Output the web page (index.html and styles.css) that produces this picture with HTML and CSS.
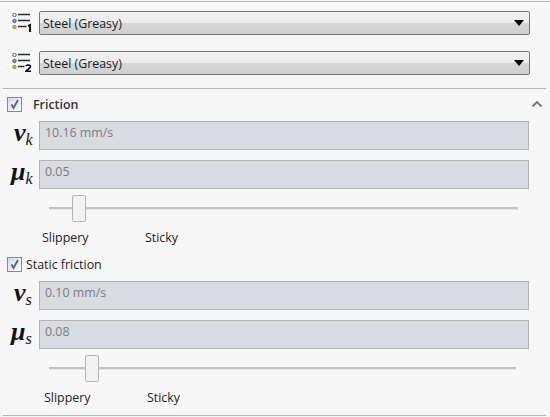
FILE: index.html
```html
<!DOCTYPE html>
<html lang="en">
<head>
<meta charset="utf-8">
<title>Friction</title>
<link rel="stylesheet" href="styles.css">
</head>
<body>
<div class="panel">
  <div class="select-group">
    <div class="select-row">
      <svg class="list-icon" width="24" height="20" viewBox="0 0 24 20">
        <circle cx="4.500" cy="2" r="1.700" fill="#f4f4f4" stroke="#666"/>
        <circle cx="4.500" cy="8" r="1.700" fill="#6aa5d8" stroke="#3a6a9a"/>
        <circle cx="4.500" cy="14" r="1.700" fill="#e8bd3a" stroke="#a8831c"/>
        <path d="M8 1.500h12M8 7.500h12M8 13.500h8.500" stroke="#2a2a2a" stroke-width="1.500"/>
        <path d="M18 13l2-1v7" stroke="#000" stroke-width="1.800" fill="none"/>
      </svg>
      <div class="select"><span>Steel (Greasy)</span><i class="arrow"></i></div>
    </div>
    <div class="select-row">
      <svg class="list-icon" width="24" height="20" viewBox="0 0 24 20">
        <circle cx="4.500" cy="2" r="1.700" fill="#f4f4f4" stroke="#666"/>
        <circle cx="4.500" cy="8" r="1.700" fill="#6aa5d8" stroke="#3a6a9a"/>
        <circle cx="4.500" cy="14" r="1.700" fill="#e8bd3a" stroke="#a8831c"/>
        <path d="M8 1.500h12M8 7.500h12M8 13.500h6.500" stroke="#2a2a2a" stroke-width="1.500"/>
        <path d="M16 13c.5-1.500 4.500-1.500 4.500.6 0 1.900-4 2.800-4.500 4.700h5" stroke="#000" stroke-width="1.600" fill="none"/>
      </svg>
      <div class="select"><span class="select-text-low">Steel (Greasy)</span><i class="arrow"></i></div>
    </div>
  </div>

  <section class="friction">
    <header class="friction-head">
      <span class="check"><svg width="11" height="11" viewBox="0 0 11 11"><path d="M2.500 5.500l2 3.500L9 1" fill="none" stroke="#3d5fa8" stroke-width="1.800"/></svg></span>
      <strong>Friction</strong>
      <svg class="chevron" width="12" height="8" viewBox="0 0 12 8"><path d="M1.500 6.500L6 2l4.500 4.500" fill="none" stroke="#777" stroke-width="1.800"/></svg>
    </header>
    <div class="field"><span class="symbol sym-v"><b>v</b><em>k</em></span><div class="input">10.16 mm/s</div></div>
    <div class="field"><span class="symbol"><b>μ</b><em>k</em></span><div class="input">0.05</div></div>
    <div class="slider"><i class="thumb thumb-k"></i></div>
    <div class="slider-labels"><span>Slippery</span><span>Sticky</span></div>
  </section>

  <section class="static">
    <label class="static-head">
      <span class="check"><svg width="11" height="11" viewBox="0 0 11 11"><path d="M2.500 5.500l2 3.500L9 1" fill="none" stroke="#3d5fa8" stroke-width="1.800"/></svg></span>
      Static friction
    </label>
    <div class="field"><span class="symbol sym-v"><b>v</b><em>s</em></span><div class="input">0.10 mm/s</div></div>
    <div class="field"><span class="symbol"><b>μ</b><em>s</em></span><div class="input">0.08</div></div>
    <div class="slider slider-s"><i class="thumb thumb-s"></i></div>
    <div class="slider-labels labels-s"><span>Slippery</span><span>Sticky</span></div>
  </section>
</div>
</body>
</html>
```
FILE: styles.css
```css
html, body {
  margin: 0;
  padding: 0;
}
body {
  width: 550px;
  height: 417px;
  overflow: hidden;
  background: #f7f7f7;
  font-family: "Open Sans", "Noto Sans", sans-serif;
  font-size: 12.4px;
  color: #222;
}
.panel {
  box-sizing: border-box;
  border-top: 1px solid #b9b9b9;
  margin: 1px 0 0;
  height: 416px;
}
.select-group {
  margin: 0 4px 0 3px;
  padding: 9px 0 13px;
  border-bottom: 1px solid #b5b5b5;
  display: flex;
  flex-direction: column;
  gap: 16px;
}
.select-row {
  display: flex;
  align-items: center;
  gap: 5px;
  padding-left: 7px;
  padding-right: 16px;
}
.list-icon {
  flex: none;
}
.select {
  flex: 1;
  height: 24px;
  box-sizing: border-box;
  border: 1px solid #777;
  border-radius: 2px;
  background: linear-gradient(#f2f2f2 0, #ececec 48%, #d6d6d6 52%, #d0d0d0 100%);
  display: flex;
  align-items: center;
  justify-content: space-between;
  padding: 0 5px 0 3px;
}
.select-text-low {
  margin-top: 1px;
}
.arrow {
  width: 0;
  height: 0;
  border-left: 5px solid transparent;
  border-right: 5px solid transparent;
  border-top: 6px solid #000;
}
.check {
  flex: none;
  width: 15px;
  height: 15px;
  box-sizing: border-box;
  border: 1px solid #8a8a8a;
  background: linear-gradient(135deg, #d4d9e2, #fff);
  display: inline-flex;
  align-items: center;
  justify-content: center;
}
.friction {
  padding: 7px 0 0 7px;
}
.friction-head {
  display: flex;
  align-items: center;
  height: 16px;
  margin-bottom: 9px;
  padding-right: 7px;
}
.friction-head strong {
  margin-left: 11px;
  font-weight: 600;
  color: #333;
}
.chevron {
  margin-left: auto;
}
.field {
  display: flex;
  align-items: center;
  height: 29px;
  margin-bottom: 10px;
}
.symbol {
  width: 32px;
  flex: none;
  box-sizing: border-box;
  margin-bottom: 5px;
  padding-left: 4px;
  font-family: "Liberation Serif", serif;
  font-style: italic;
  color: #111;
  white-space: nowrap;
}
.sym-v {
  padding-left: 7px;
}
.symbol b {
  font-size: 26px;
  line-height: 1;
}
.symbol em {
  font-size: 16px;
  position: relative;
  top: 4px;
}
.input {
  width: 490px;
  height: 29px;
  box-sizing: border-box;
  border: 1px solid #b4b4b4;
  background: #d8dbdf;
  color: #7d7d7d;
  line-height: 22px;
  padding-left: 5px;
}
.slider {
  position: relative;
  width: 469px;
  height: 2px;
  margin: 18px 0 0 42px;
  background: #c4c4c4;
  border-bottom: 1px solid #e4e4e4;
}
.thumb {
  position: absolute;
  top: -12px;
  width: 12px;
  height: 25px;
  border: 1px solid #b4b4b4;
  border-radius: 2px;
  background: #f2f2f2;
}
.thumb-k {
  left: 23px;
}
.thumb-s {
  left: 36px;
}
.slider-labels {
  display: flex;
  margin: 20px 0 0 35px;
  height: 16px;
  line-height: 16px;
}
.slider-labels span:first-child {
  width: 103px;
}
.static {
  margin: 10px 4px 0 3px;
  padding: 0 0 9px 4px;
  border-bottom: 1px solid #b5b5b5;
}
.static-head {
  display: flex;
  align-items: center;
  gap: 4px;
  height: 16px;
  margin-bottom: 9px;
}
.labels-s {
  margin-left: 37px;
}
.slider-s {
  width: 467px;
}
```
